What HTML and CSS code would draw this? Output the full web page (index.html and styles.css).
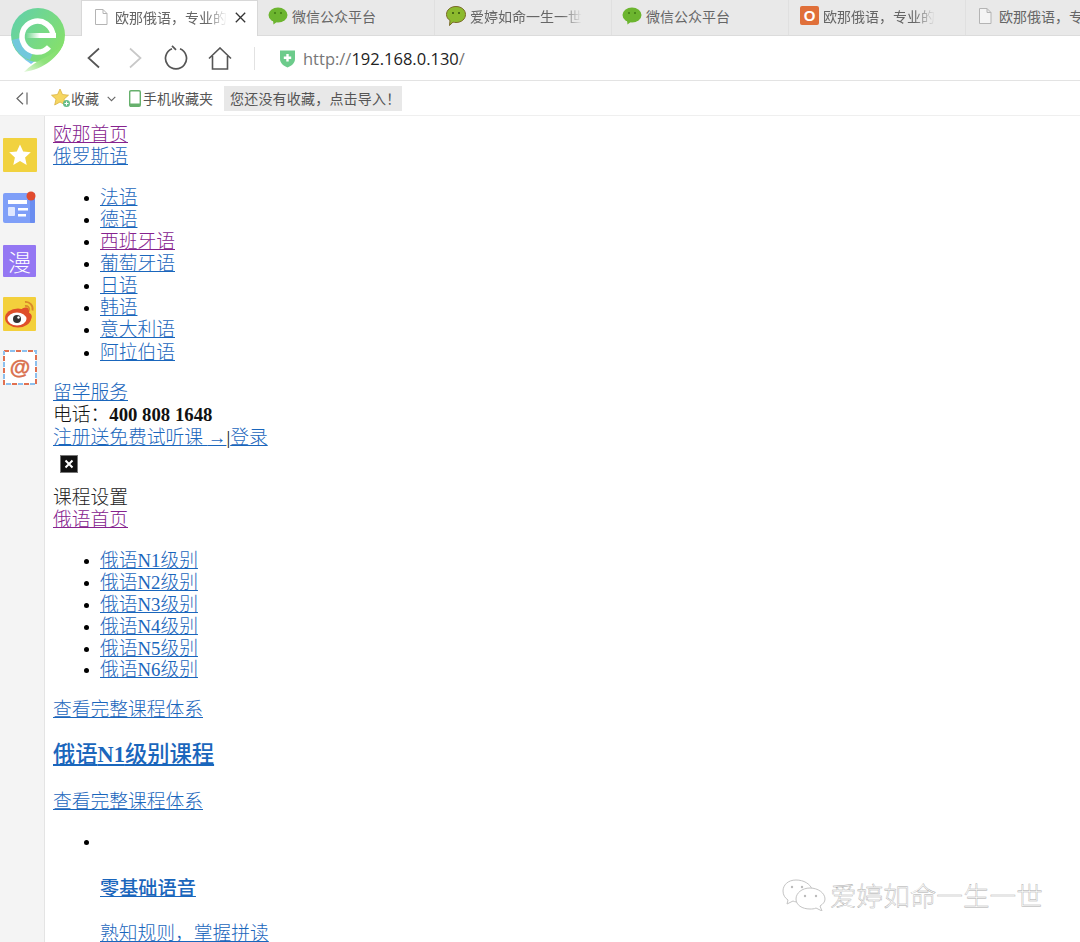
FILE: index.html
```html
<!DOCTYPE html>
<html lang="zh-CN">
<head>
<meta charset="utf-8">
<title>欧那俄语</title>
<link rel="stylesheet" href="styles.css">
</head>
<body>
<div class="browser">
  <svg class="logo" width="60" height="68" viewBox="9 6 60 68">
    <defs>
      <linearGradient id="ring" x1="0" y1="0" x2="1" y2="0.7">
        <stop offset="0" stop-color="#5fcfae"/><stop offset="1" stop-color="#86e06a"/>
      </linearGradient>
      <linearGradient id="tail" x1="1" y1="0" x2="0" y2="1">
        <stop offset="0" stop-color="#80e06a"/><stop offset=".6" stop-color="#8fe27c"/><stop offset="1" stop-color="#e4f8dc"/>
      </linearGradient>
      <linearGradient id="bar" x1="0" y1="0" x2="1" y2="0">
        <stop offset="0" stop-color="#fff" stop-opacity="0"/><stop offset=".45" stop-color="#fff"/>
      </linearGradient>
    </defs>
    <path d="M12 42 Q18 56 31 64 L42 56 Z" fill="#7cc8ef"/>
    <circle cx="38" cy="35" r="27" fill="url(#ring)"/>
    <path d="M12 40 A27 27 0 0 0 30 60 L34 50 L20 38 Z" fill="#72c8dc"/>
    <path d="M64.500 40 C60 57 44 69 24 72 C30 66 36 62 42 59 C52 55 60 48 64.500 40Z" fill="url(#tail)"/>
    <path d="M53 36 A15.500 15.500 0 1 0 49 47" fill="none" stroke="#fff" stroke-width="5.500"/>
    <rect x="26" y="33" width="30" height="5" fill="url(#bar)"/>
  </svg>

  <div class="tabbar">
    <div class="tab tab-active">
      <svg class="ico" width="14" height="16" viewBox="0 0 14 16"><path d="M1.500 .5H9L13 4.500V15.500H1.500Z M9 .5V4.500H13" fill="#fff" stroke="#b4b4b4"/></svg>
      <span class="tab-label">欧那俄语，专业的</span>
      <svg class="close" width="11" height="11" viewBox="0 0 11 11"><path d="M.8 .8L10.200 10.200M10.200 .8L.8 10.200" stroke="#333" stroke-width="1.300"/></svg>
    </div>
    <div class="tab tab-app">
      <svg class="ico-l" width="20" height="18" viewBox="0 0 20 18"><ellipse cx="10" cy="8" rx="9.500" ry="7.500" fill="#6cb52f"/><path d="M5 13L5.500 17.500L10 14Z" fill="#6cb52f"/><circle cx="7" cy="6" r="1" fill="#3e7a14"/><circle cx="13" cy="6" r="1" fill="#3e7a14"/></svg>
      <span class="tab-label label-plain">微信公众平台</span>
    </div>
    <div class="tab tab-app tab-app-wide">
      <svg class="ico-l" width="20" height="20" viewBox="0 0 20 20"><path d="M10 .5C15.500 .5 19.500 4 19.500 8.500S15.500 16.500 10 16.500C9 16.500 8 16.400 7 16.100L3.500 19.500L4 14.500C1.800 13 .5 11 .5 8.500C.5 4 4.500 .5 10 .5Z" fill="#8cba2e" stroke="#7b6a2a"/><circle cx="7" cy="7" r="1" fill="#33500f"/><circle cx="13" cy="7" r="1" fill="#33500f"/></svg>
      <span class="tab-label">爱婷如命一生一世</span>
    </div>
    <div class="tab tab-app">
      <svg class="ico-l" width="20" height="18" viewBox="0 0 20 18"><ellipse cx="10" cy="8" rx="9.500" ry="7.500" fill="#6cb52f"/><path d="M5 13L5.500 17.500L10 14Z" fill="#6cb52f"/><circle cx="7" cy="6" r="1" fill="#3e7a14"/><circle cx="13" cy="6" r="1" fill="#3e7a14"/></svg>
      <span class="tab-label label-plain">微信公众平台</span>
    </div>
    <div class="tab tab-app tab-app-wide">
      <span class="o-badge">O</span>
      <span class="tab-label">欧那俄语，专业的</span>
    </div>
    <div class="tab tab-doc">
      <svg class="ico" width="14" height="16" viewBox="0 0 14 16"><path d="M1.500 .5H9L13 4.500V15.500H1.500Z M9 .5V4.500H13" fill="#f4f4f4" stroke="#b4b4b4"/></svg>
      <span class="tab-last">欧那俄语，专</span>
    </div>
  </div>

  <div class="toolbar">
    <svg width="15" height="22" viewBox="0 0 15 22"><path d="M13 1.500L2.500 11L13 20.500" fill="none" stroke="#555" stroke-width="1.700"/></svg>
    <svg class="forward" width="15" height="22" viewBox="0 0 15 22"><path d="M2 1.500L12.500 11L2 20.500" fill="none" stroke="#c8c8c8" stroke-width="1.700"/></svg>
    <svg class="reload" width="24" height="26" viewBox="0 0 24 26"><path d="M8 3.700A10.500 10.500 0 1 0 16 3.700M8 .8L12 4.800" fill="none" stroke="#555" stroke-width="1.700"/></svg>
    <svg class="home" width="24" height="23" viewBox="0 0 24 23"><path d="M1 11.500L12 1L23 11.500M4.500 9V22H19.500V9" fill="none" stroke="#555" stroke-width="1.600"/></svg>
    <span class="divider"></span>
    <svg class="shield" width="17" height="19" viewBox="0 0 17 19"><path d="M1 1.500H16V10C16 14 12.500 17 8.500 18.500C4.500 17 1 14 1 10Z" fill="#6ccb8b"/><path d="M8.500 5V12.500M4.800 8.800H12.200" stroke="#fff" stroke-width="2.400"/></svg>
    <span class="url"><span class="url-dim">http://</span>192.168.0.130<span class="url-dim">/</span></span>
  </div>

  <div class="bookmarks">
    <svg class="collapse" width="12" height="13" viewBox="0 0 12 13"><path d="M7 .8L1 6.500L7 12.200M11 .5V12.500" fill="none" stroke="#666" stroke-width="1.200"/></svg>
    <svg class="bm-star" width="20" height="20" viewBox="0 0 20 20"><path d="M9 1L11.500 6.500L17.500 7.200L13 11.200L14.300 17L9 14L3.700 17L5 11.200L.5 7.200L6.500 6.500Z" fill="#f6d661" stroke="#d9b343" stroke-width=".8"/><circle cx="15.500" cy="15.500" r="3.500" fill="#66bb88"/><path d="M15.500 13.500V17.500M13.500 15.500H17.500" stroke="#fff"/></svg>
    <span class="bm-text">收藏</span>
    <svg class="caret" width="9" height="6" viewBox="0 0 9 6"><path d="M.7 .8L4.500 4.600L8.300 .8" fill="none" stroke="#666" stroke-width="1.100"/></svg>
    <svg class="phone" width="12" height="17" viewBox="0 0 12 17"><rect x=".7" y=".7" width="10.600" height="15.600" rx="1.200" fill="#fff" stroke="#66b06c" stroke-width="1.400"/><rect x="1" y="13.500" width="10" height="2.500" fill="#66b06c"/></svg>
    <span class="bm-text">手机收藏夹</span>
    <span class="bm-hint">您还没有收藏，点击导入！</span>
  </div>

  <div class="main">
    <aside class="rail">
      <div class="rail-ico star-box">
        <svg width="24" height="24" viewBox="0 0 24 24"><path d="M12 1.500L15.200 8.500L22.800 9.300L17.100 14.400L18.700 22L12 18.100L5.300 22L6.900 14.400L1.200 9.300L8.800 8.500Z" fill="#fff"/></svg>
      </div>
      <div class="rail-ico news-box">
        <svg width="34" height="33" viewBox="0 0 34 33"><rect x="0" y="2" width="32" height="30" rx="2" fill="#7f9ff8"/><rect x="27" y="2" width="5" height="30" rx="1" fill="#6a8df0"/><rect x="5" y="9" width="19" height="4" fill="#fff"/><rect x="5" y="16" width="7" height="9" rx="1" fill="#dfe7ff"/><rect x="15" y="17" width="10" height="2.500" fill="#fff"/><rect x="15" y="23" width="8" height="2.500" fill="#fff"/><circle cx="28" cy="5" r="4.500" fill="#e14a2e"/></svg>
      </div>
      <div class="rail-ico manga-box"><span class="manga-text">漫</span></div>
      <div class="rail-ico weibo-box">
        <svg width="33" height="34" viewBox="0 0 33 34"><ellipse cx="15" cy="21" rx="13" ry="9.500" fill="#df4f2a"/><path d="M17 14C21 8 28 10 26 16C29 17 30 20 27 24L18 20Z" fill="#df4f2a"/><ellipse cx="14" cy="22" rx="9.500" ry="6.500" fill="#fff"/><circle cx="14" cy="22" r="4" fill="#333"/><circle cx="15.500" cy="20.500" r="1.200" fill="#fff"/><path d="M22 5C26.500 4.500 30.500 8.500 29.500 13.500M22 9C24.500 8.500 26.800 10.500 26.300 13.500" fill="none" stroke="#d98a2a" stroke-width="1.800"/></svg>
      </div>
      <div class="rail-ico mail-box">
        <svg width="34" height="35" viewBox="0 0 34 35"><rect x="1" y="1" width="32" height="33" fill="#fff"/><rect x="1" y="1" width="32" height="33" fill="none" stroke="#e07050" stroke-width="2" stroke-dasharray="5 7"/><rect x="1" y="1" width="32" height="33" fill="none" stroke="#8cc0ee" stroke-width="2" stroke-dasharray="5 7" stroke-dashoffset="6"/><text x="17" y="24" class="mail-at">@</text></svg>
      </div>
    </aside>

    <div class="page">
      <div><a class="visited" href="#a">欧那首页</a></div>
      <div><a href="#a">俄罗斯语</a></div>
      <ul class="list">
        <li><a href="#a">法语</a></li>
        <li><a href="#a">德语</a></li>
        <li><a class="visited" href="#a">西班牙语</a></li>
        <li><a href="#a">葡萄牙语</a></li>
        <li><a href="#a">日语</a></li>
        <li><a href="#a">韩语</a></li>
        <li><a href="#a">意大利语</a></li>
        <li><a href="#a">阿拉伯语</a></li>
      </ul>
      <div><a href="#a">留学服务</a></div>
      <div>电话：<b>400 808 1648</b></div>
      <div class="signup"><a href="#a">注册送免费试听课 <span class="arrow">→</span></a>|<a href="#a">登录</a></div>
      <div class="broken"><span class="broken-img"><svg width="12" height="12" viewBox="0 0 12 12"><path d="M2.500 2.500L9.500 9.500M9.500 2.500L2.500 9.500" stroke="#fff" stroke-width="2"/></svg></span></div>
      <div class="plain">课程设置</div>
      <div><a class="visited" href="#a">俄语首页</a></div>
      <ul class="list list-tight">
        <li><a href="#a">俄语N1级别</a></li>
        <li><a href="#a">俄语N2级别</a></li>
        <li><a href="#a">俄语N3级别</a></li>
        <li><a href="#a">俄语N4级别</a></li>
        <li><a href="#a">俄语N5级别</a></li>
        <li><a href="#a">俄语N6级别</a></li>
      </ul>
      <div><a href="#a">查看完整课程体系</a></div>
      <h3 class="heading"><a href="#a">俄语<b>N1</b>级别课程</a></h3>
      <div><a href="#a">查看完整课程体系</a></div>
      <ul class="list list-last">
        <li>
          <div class="empty">&nbsp;</div>
          <h4 class="sub"><a href="#a">零基础语音</a></h4>
          <p class="para"><a href="#a">熟知规则，掌握拼读</a></p>
        </li>
      </ul>
    </div>
  </div>

  <div class="watermark">
    <svg width="44" height="32" viewBox="0 0 44 32"><g fill="#fff" stroke="#c4c4c4" stroke-width="1"><path d="M14 1C6 1 1 6 1 12C1 16 3 19 6 21L5 25L11 22C13 23 15 23 18 23L30 10C28 5 22 1 14 1Z"/><path d="M28 9C20 9 14 14 14 20C14 26 20 30 28 30C30 30 32 30 34 29L40 32L38 27C41 25 43 23 43 20C43 14 36 9 28 9Z"/></g><g fill="#bbb"><circle cx="10" cy="8" r="1.200"/><circle cx="20" cy="8" r="1.200"/><circle cx="23" cy="17" r="1.200"/><circle cx="34" cy="17" r="1.200"/></g></svg>
    <span class="wm-text">爱婷如命一生一世</span>
  </div>
</div>
</body>
</html>
```

FILE: styles.css
```css
* { box-sizing: border-box; }
html, body { margin: 0; padding: 0; background: #fff; }
.browser {
  position: relative;
  width: 1080px;
  height: 942px;
  overflow: hidden;
  display: flex;
  flex-direction: column;
  font-family: "Liberation Serif", "Noto Sans CJK SC", serif;
}
.logo { position: absolute; left: 9px; top: 6px; z-index: 2; }

.tabbar {
  display: flex;
  height: 36px;
  padding-left: 81px;
  background: #e9e9e9;
  border-bottom: 1px solid #dcdcdc;
  flex: none;
}
.tab {
  flex: none;
  width: 177px;
  display: flex;
  align-items: center;
  padding-bottom: 4px;
  border-right: 1px solid #e0e0e0;
  font: 14px "Noto Sans CJK SC", sans-serif;
  color: #666;
  white-space: nowrap;
  overflow: hidden;
}
.tab-active {
  background: #fff;
  height: 36px;
  padding-left: 12px;
  padding-bottom: 3px;
  gap: 7px;
  border-left: 1px solid #d8d8d8;
  border-right: 1px solid #d8d8d8;
  border-top: 1px solid #d8d8d8;
}
.tab-app { padding-left: 10px; gap: 4px; }
.tab-app-wide { padding-left: 11px; }
.tab-doc { padding-left: 12px; gap: 7px; border-right: 0; }
.ico { flex: none; }
.ico-l { flex: none; }
.tab-label {
  flex: none;
  -webkit-mask-image: linear-gradient(to right, #000 82%, transparent 100%);
  mask-image: linear-gradient(to right, #000 82%, transparent 100%);
}
.label-plain { -webkit-mask-image: none; mask-image: none; }
.tab-last { flex: none; }
.close { flex: none; margin-left: 1px; }
.o-badge {
  flex: none;
  width: 19px;
  height: 19px;
  background: #e0703a;
  border-radius: 2px;
  color: #fff;
  font: bold 15px/19px "Liberation Sans", sans-serif;
  text-align: center;
}

.toolbar {
  display: flex;
  align-items: center;
  height: 45px;
  padding-left: 86px;
  background: #fff;
  border-bottom: 1px solid #e3e3e3;
  flex: none;
}
.forward { margin-left: 27px; }
.reload { margin-left: 21px; }
.home { margin-left: 20px; }
.divider { width: 1px; height: 23px; background: #e2e2e2; margin-left: 22px; }
.shield { margin-left: 24px; }
.url {
  margin-left: 7px;
  font: 16.500px "Open Sans", "Liberation Sans", sans-serif;
  color: #222;
}
.url-dim { color: #777; }

.bookmarks {
  display: flex;
  align-items: center;
  height: 35px;
  padding-left: 16px;
  background: #fff;
  border-bottom: 1px solid #efefef;
  flex: none;
  font: 14px "Noto Sans CJK SC", sans-serif;
  color: #555;
}
.collapse { flex: none; }
.bm-star { margin-left: 23px; }
.bm-text { white-space: nowrap; }
.caret { margin-left: 8px; margin-right: 13px; margin-top: 2px; }
.phone { margin-right: 2px; }
.bm-hint {
  margin-left: 11px;
  height: 25px;
  line-height: 25px;
  padding: 0 6px;
  width: 178px;
  background: #e8e8e8;
  white-space: nowrap;
  letter-spacing: .2px;
}

.main { display: flex; flex: 1; min-height: 0; }
.rail {
  flex: none;
  width: 45px;
  background: #f4f4f4;
  border-right: 1px solid #e4e4e4;
  display: flex;
  flex-direction: column;
  align-items: flex-start;
  padding: 22px 0 0 3px;
}
.rail-ico {
  width: 34px;
  height: 34px;
  display: flex;
  align-items: center;
  justify-content: center;
  border-radius: 1px;
}
.star-box { background: #f1d23f; }
.news-box { margin-top: 19px; height: 33px; }
.manga-box { background: #9477f3; margin-top: 21px; width: 33px; height: 32px; }
.manga-text { color: #fff; font: 300 23px/1 "Noto Sans CJK SC", sans-serif; }
.weibo-box { background: #f3d03c; margin-top: 20px; width: 33px; }
.mail-box { margin-top: 19px; height: 35px; }
.mail-at {
  font: bold 21px "Liberation Sans", sans-serif;
  fill: #d9704e;
  stroke: #d9704e;
  stroke-width: .4px;
  text-anchor: middle;
}

.page {
  flex: 1;
  min-width: 0;
  padding: 8px 0 0 8px;
  font-size: 18.750px;
  font-weight: 300;
  line-height: 22.100px;
  color: #111;
}
.page b { font-weight: 700; }
.page a { color: #1a66bc; text-decoration: underline; }
.page a.visited { color: #86228e; }
.plain { color: #222; }
.signup { line-height: 21.800px; }
.list { margin: 18.700px 0; padding: 0 0 0 47px; list-style: none; }
.list li { position: relative; }
.list li::before {
  content: "";
  position: absolute;
  left: -16px;
  top: 9px;
  width: 5px;
  height: 5px;
  border-radius: 50%;
  background: #000;
}
.list-tight { line-height: 21.800px; margin-top: 19.200px; margin-bottom: 18px; }
.list-last { margin-top: 17.300px; }
.broken { height: 38.700px; padding: 7px 0 0 7px; }
.broken-img {
  display: block;
  width: 18px;
  height: 18px;
  background: #111;
  border: 1px solid #777;
  padding: 2px;
  line-height: 0;
}
.heading { font-size: 22.300px; line-height: 26px; margin: 21px 0 23px; font-weight: 500; }
.empty { height: 22px; }
.sub { font-size: 19.200px; line-height: 22px; margin: 25px 0 23px; font-weight: 500; }
.para { margin: 0; }

.watermark {
  position: absolute;
  left: 782px;
  top: 875px;
  display: flex;
  align-items: center;
  gap: 4px;
}
.wm-text {
  font: 300 26.600px "Noto Sans CJK SC", sans-serif;
  color: #fff;
  -webkit-text-stroke: .4px #aaa;
  white-space: nowrap;
}
```
